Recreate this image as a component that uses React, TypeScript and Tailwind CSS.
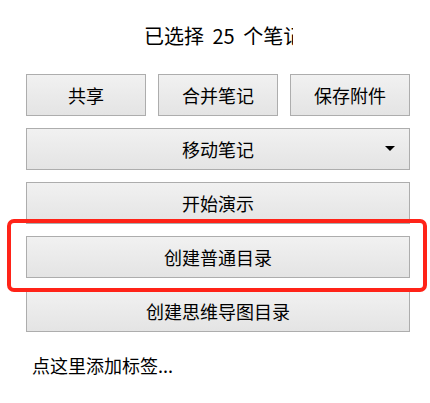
import React from 'react';

const btn =
  'h-[42px] flex items-center justify-center border border-[#adadad] bg-linear-to-b from-[#f1f1f1] to-[#e4e4e4] text-[18px] text-black leading-none';

export default function App() {
  return (
    <div className="relative w-[430px] h-[403px] bg-white pl-[26px] pr-[20px] font-['Noto_Sans_CJK_SC','Noto_Sans',sans-serif] text-black">
      <div className="h-[74px] flex items-center">
        <div className="ml-[118px] w-[149px] overflow-hidden whitespace-nowrap text-[20px] leading-none pb-[2px] [word-spacing:4px]">
          已选择 25 个笔记
        </div>
      </div>

      <div className="flex flex-col gap-[12px]">
        <div className="grid grid-cols-3 gap-[12px]">
          <div className={btn}>共享</div>
          <div className={btn}>合并笔记</div>
          <div className={btn}>保存附件</div>
        </div>
        <div className={`${btn} relative`}>
          移动笔记
          <svg className="absolute right-[14px] top-[17px]" width="10" height="5" viewBox="0 0 10 5">
            <path d="M0 0h10L5 5z" fill="#000" />
          </svg>
        </div>
        <div className={btn}>开始演示</div>
        <div className={btn}>创建普通目录</div>
        <div className={btn}>创建思维导图目录</div>
      </div>

      <div className="pl-[6px] mt-[24px] text-[18px] leading-none">点这里添加标签...</div>

      {/* annotation frame */}
      <div className="absolute left-[7px] top-[219px] w-[420px] h-[73px] border-[4.5px] border-[#ff2318] rounded-[7px] pointer-events-none" />
    </div>
  );
}
